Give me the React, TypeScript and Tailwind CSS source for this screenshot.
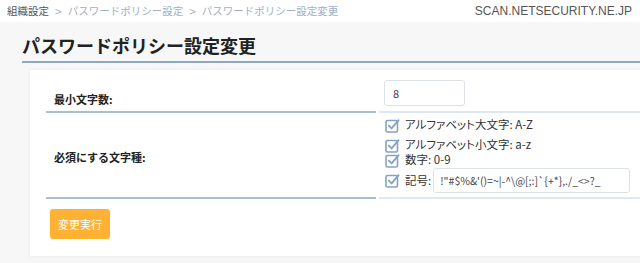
import React from 'react';

const font = { fontFamily: '"Noto Sans CJK JP", "Noto Sans", sans-serif' };

function CheckIcon() {
  return (
    <svg width="15" height="15" viewBox="0 0 15 15" className="shrink-0">
      <rect x="1" y="2.5" width="11.5" height="11.5" rx="1.5" fill="none" stroke="#86a3c2" strokeWidth="1.6" />
      <path d="M3.8 7.6 L6.6 10.4 L13.6 2.2" fill="none" stroke="#86a3c2" strokeWidth="1.9" strokeLinecap="round" strokeLinejoin="round" />
    </svg>
  );
}

function CheckRow({ label, className }: { label: string; className?: string }) {
  return (
    <div className={`flex items-center gap-[5px] ${className ?? ''}`}>
      <CheckIcon />
      <span className="text-[11.5px] text-[#333] leading-none [font-feature-settings:'palt']">{label}</span>
    </div>
  );
}

export default function App() {
  return (
    <div className="w-[640px] h-[263px] bg-[#f7f7f7] overflow-hidden" style={font}>
      {/* top bar */}
      <div className="h-[22px] bg-white flex items-center justify-between pl-[7px] pr-[8px]">
        <div className="flex items-center text-[10.5px] leading-none">
          <span className="text-[#555]">組織設定</span>
          <span className="text-[#a7b4c2] text-[12px] mx-[6px]">&gt;</span>
          <span className="text-[#9fb0c2]">パスワードポリシー設定</span>
          <span className="text-[#a7b4c2] text-[12px] mx-[6px]">&gt;</span>
          <span className="text-[#9fb0c2]">パスワードポリシー設定変更</span>
        </div>
        <span className="text-[12px] text-[#555] leading-none" style={{ fontFamily: '"Liberation Sans", sans-serif', fontWeight: 300 }}>
          SCAN.NETSECURITY.NE.JP
        </span>
      </div>

      {/* title */}
      <div className="ml-[22px] pt-[12px] pb-[5px] border-b-2 border-[#8ea8c2]">
        <h1 className="text-[18px] font-bold text-[#222] leading-[22px]">パスワードポリシー設定変更</h1>
      </div>

      {/* card */}
      <div className="ml-[30px] mt-[7px] bg-white shadow-[0_0_4px_rgba(0,0,0,0.06)] pl-[16px] pt-[10px] pb-[17px]">
        {/* row 1 */}
        <div className="flex gap-[3px]">
          <div className="w-[330px] border-b-2 border-[#a9bdd4] flex items-center pl-[8px] pt-[8px]">
            <span className="text-[11px] font-bold text-[#222]">最小文字数:</span>
          </div>
          <div className="flex-1 border-b-2 border-[#dfe7ef] pl-[5px] pb-[5px]">
            <div className="w-[81px] h-[26px] border border-[#dde2e7] rounded-[3px] flex items-center pl-[8px] text-[11px] text-[#444]">
              8
            </div>
          </div>
        </div>

        {/* row 2 */}
        <div className="flex gap-[3px]">
          <div className="w-[330px] border-b-2 border-[#a9bdd4] flex items-center pl-[8px] pt-[4px]">
            <span className="text-[11px] font-bold text-[#222]">必須にする文字種:</span>
          </div>
          <div className="flex-1 border-b-2 border-[#dfe7ef] pl-[6px] pt-[4px] pb-[4px]">
            <CheckRow label="アルファベット大文字: A-Z" className="h-[16px]" />
            <CheckRow label="アルファベット小文字: a-z" className="h-[16px] mt-[4px]" />
            <CheckRow label="数字: 0-9" className="h-[14px]" />
            <div className="flex items-center gap-[5px] mt-[1px]">
              <CheckIcon />
              <span className="text-[11.5px] text-[#333] leading-none [font-feature-settings:'palt']">記号:</span>
              <div className="w-[197px] h-[25px] border border-[#dde2e7] rounded-[3px] flex items-center pl-[6px] text-[10.5px] text-[#444] ml-[-3px]">
                {'!"#$%&\'()=~|-^\\@[;:]`{+*},./_<>?_'}
              </div>
            </div>
          </div>
        </div>

        {/* button */}
        <button className="mt-[10px] ml-[4px] w-[60px] h-[30px] rounded-[3px] bg-[#ffb133] text-white text-[11px] flex items-center justify-center">
          変更実行
        </button>
      </div>
    </div>
  );
}
